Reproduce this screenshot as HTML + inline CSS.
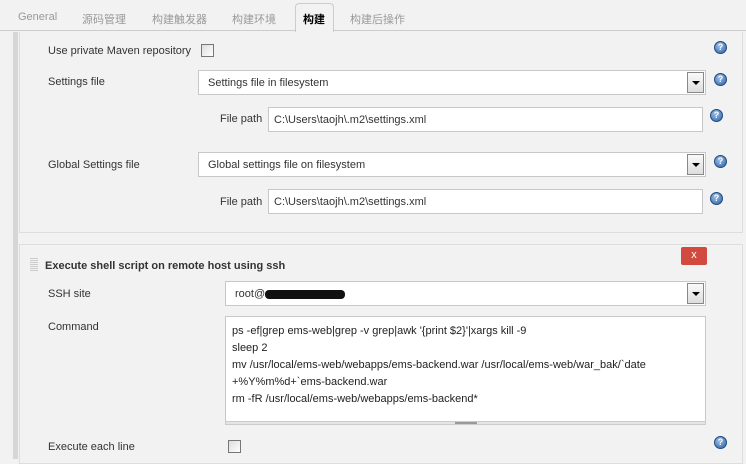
<!DOCTYPE html>
<html><head><meta charset="utf-8"><style>
*{box-sizing:border-box}
body{margin:0;width:746px;height:459px;overflow:hidden;background:#f2f2f2;font-family:"Liberation Sans","Noto Sans CJK SC",sans-serif;font-size:11px;color:#333;position:relative}
.a{position:absolute}
.tab{position:absolute;top:11px;color:#999;font-size:11px}
.lbl{position:absolute;font-size:11px;color:#333;margin-top:1px}
.sel{position:absolute;background:#fff;border:1px solid #c8c8c8;height:25px;padding:6px 9px;font-size:11px}
.sel .btn{position:absolute;right:1px;top:1px;width:17px;height:21px;border:1px solid #888;background:linear-gradient(#fafafa,#ddd)}
.sel .btn:after{content:"";position:absolute;left:4px;top:8px;border-left:4px solid transparent;border-right:4px solid transparent;border-top:4px solid #000}
.inp{position:absolute;background:#fff;border:1px solid #c8c8c8;height:25px;padding:6px 5px;font-size:11px}
.help{position:absolute;width:13px;height:13px;border-radius:50%;background:radial-gradient(circle at 40% 35%,#9bc0e8,#2d5f9e);border:1px solid #1e4a80;color:#fff;font-size:9px;font-weight:bold;text-align:center;line-height:11px}
.cb{position:absolute;width:13px;height:13px;border:1px solid #777;background:linear-gradient(135deg,#ddd,#fff)}
</style></head><body>
<div class="a" style="left:0;top:0;width:746px;height:31px;background:#f2f2f2;border-bottom:1px solid #ccc"></div>
<span class="tab" style="left:18px">General</span>
<span class="tab" style="left:82px">源码管理</span>
<span class="tab" style="left:152px">构建触发器</span>
<span class="tab" style="left:232px">构建环境</span>
<div class="a" style="left:295px;top:3px;width:39px;height:29px;background:#f2f2f2;border:1px solid #ccc;border-bottom:none;border-radius:4px 4px 0 0"></div>
<span class="tab" style="left:303px;color:#000;font-weight:bold">构建</span>
<span class="tab" style="left:350px">构建后操作</span>
<div class="a" style="left:13px;top:32px;width:5px;height:427px;background:#d6d6d6"></div>
<div class="a" style="left:19px;top:32px;width:724px;height:201px;border:1px solid #ddd;border-top:none"></div>
<div class="a" style="left:19px;top:244px;width:724px;height:220px;border:1px solid #ddd"></div>

<span class="lbl" style="left:48px;top:44px">Use private Maven repository</span>
<div class="cb" style="left:201px;top:44px"></div>
<div class="help" style="left:714px;top:41px">?</div>

<span class="lbl" style="left:48px;top:75px">Settings file</span>
<div class="sel" style="left:198px;top:70px;width:508px">Settings file in filesystem<div class="btn"></div></div>
<div class="help" style="left:714px;top:73px">?</div>

<span class="lbl" style="left:220px;top:112px">File path</span>
<div class="inp" style="left:268px;top:107px;width:435px">C:\Users\taojh\.m2\settings.xml</div>
<div class="help" style="left:710px;top:109px">?</div>

<span class="lbl" style="left:48px;top:158px">Global Settings file</span>
<div class="sel" style="left:198px;top:152px;width:508px">Global settings file on filesystem<div class="btn"></div></div>
<div class="help" style="left:714px;top:155px">?</div>

<span class="lbl" style="left:220px;top:195px">File path</span>
<div class="inp" style="left:268px;top:189px;width:435px">C:\Users\taojh\.m2\settings.xml</div>
<div class="help" style="left:710px;top:192px">?</div>

<div class="a" style="left:681px;top:247px;width:26px;height:18px;background:#d24a3f;border-radius:2px;color:#fff;text-align:center;font-size:11px;line-height:17px">x</div>
<div class="a" style="left:30px;top:258px;width:8px;height:14px;background:repeating-linear-gradient(#ccc 0 1px,transparent 1px 2px)"></div>
<span class="lbl" style="left:45px;top:259px;font-weight:bold">Execute shell script on remote host using ssh</span>

<span class="lbl" style="left:48px;top:287px">SSH site</span>
<div class="sel" style="left:225px;top:281px;width:481px">root@<span style="display:inline-block;width:80px;height:9px;background:#111;border-radius:4px;vertical-align:middle"></span><div class="btn"></div></div>

<span class="lbl" style="left:48px;top:320px">Command</span>
<div class="a" style="left:225px;top:316px;width:481px;height:106px;background:#fff;border:1px solid #c8c8c8;padding:6px 6px;font-size:11px;line-height:17px;color:#222">ps -ef|grep ems-web|grep -v grep|awk '{print $2}'|xargs kill -9<br>sleep 2<br>mv /usr/local/ems-web/webapps/ems-backend.war /usr/local/ems-web/war_bak/`date<br>+%Y%m%d+`ems-backend.war<br>rm -fR /usr/local/ems-web/webapps/ems-backend*</div>
<div class="a" style="left:225px;top:421px;width:481px;height:4px;background:#e4e4e4;border:1px solid #ccc"></div>
<div class="a" style="left:455px;top:422px;width:22px;height:2px;background:#999"></div>

<span class="lbl" style="left:48px;top:440px">Execute each line</span>
<div class="cb" style="left:228px;top:440px"></div>
<div class="help" style="left:714px;top:436px">?</div>
</body></html>
